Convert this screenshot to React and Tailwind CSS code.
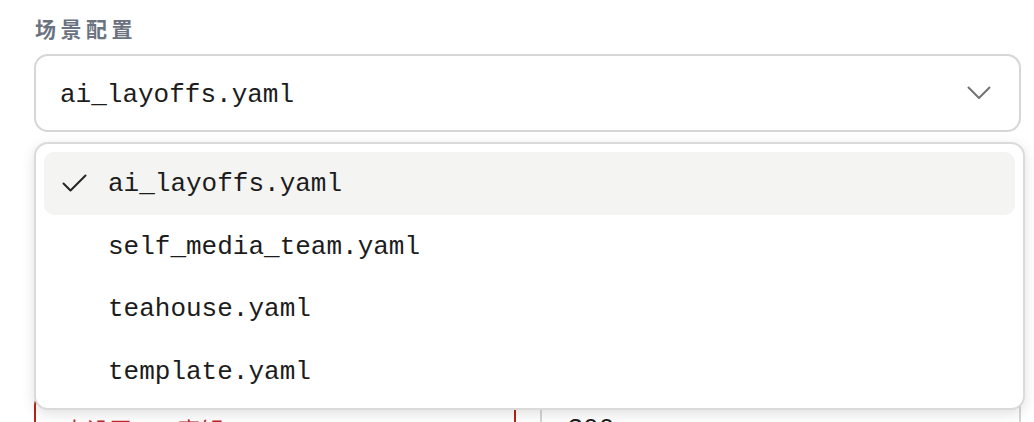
import React from "react";

const items = [
  "ai_layoffs.yaml",
  "self_media_team.yaml",
  "teahouse.yaml",
  "template.yaml",
];

const mono = { fontFamily: '"Liberation Mono", "DejaVu Sans Mono", monospace' };

export default function App() {
  return (
    <div
      className="w-[1034px] h-[422px] overflow-hidden bg-white pl-[34px] pt-[14px]"
      style={{ fontFamily: '"Noto Sans", "Noto Sans CJK SC", sans-serif' }}
    >
      <div className="w-[987px]">
        <div
          className="text-[21px] leading-[28px] font-bold tracking-[4.5px] text-[#6b7280] pl-[1px]"
          style={{ fontFamily: '"Noto Sans CJK SC", sans-serif' }}
        >
          场景配置
        </div>
        <div className="relative mt-[12px]">
          <div className="h-[78px] rounded-[14px] border-2 border-[#d6d6d6] bg-white flex items-center justify-between pl-[24px] pr-[28px]">
            <span className="pt-[4px] text-[26px] text-[#1c1c1c]" style={mono}>
              ai_layoffs.yaml
            </span>
            <svg width="24" height="14" viewBox="0 0 24 14" fill="none">
              <polyline
                points="1.5,1.5 12,12 22.5,1.5"
                stroke="#737373"
                strokeWidth="2"
                strokeLinecap="round"
                strokeLinejoin="round"
              />
            </svg>
          </div>
          <div className="absolute left-0 top-[88px] z-10 w-[991px] rounded-[14px] border-2 border-[#dadada] bg-white pt-[8px] px-[8px] pb-[6px] shadow-[0_4px_14px_rgba(0,0,0,0.12)]">
            {items.map((it, i) => (
              <div
                key={it}
                className={
                  "h-[62.5px] rounded-[10px] flex items-center pl-[18px] " +
                  (i === 0 ? "bg-[#f4f4f2]" : "")
                }
              >
                <div className="w-[25px] h-[20px] flex items-center">
                  {i === 0 && (
                    <svg width="25" height="20" viewBox="0 0 25 20" fill="none">
                      <polyline
                        points="1.5,10.5 8.5,17.5 23.5,2.5"
                        stroke="#262626"
                        strokeWidth="2"
                        strokeLinecap="round"
                        strokeLinejoin="round"
                      />
                    </svg>
                  )}
                </div>
                <span className="ml-[21px] pt-[3px] text-[26px] text-[#1c1c1c]" style={mono}>
                  {it}
                </span>
              </div>
            ))}
          </div>
        </div>
        <div className="mt-[260px] grid grid-cols-2 gap-[24px]">
          <div className="h-[80px] rounded-[14px] border-2 border-[#b42318] pl-[27px] pt-[20px]">
            <span
              className="text-[23px] leading-[30px] text-[#c0262d]"
              style={{ fontFamily: '"Noto Sans CJK SC", sans-serif' }}
            >
              未设置 API 密钥
            </span>
          </div>
          <div className="h-[80px] rounded-[14px] border-2 border-[#d6d6d6] pl-[26px] pt-[20px]">
            <span className="text-[26px] leading-[30px] text-[#1c1c1c]" style={mono}>
              300
            </span>
          </div>
        </div>
      </div>
    </div>
  );
}
